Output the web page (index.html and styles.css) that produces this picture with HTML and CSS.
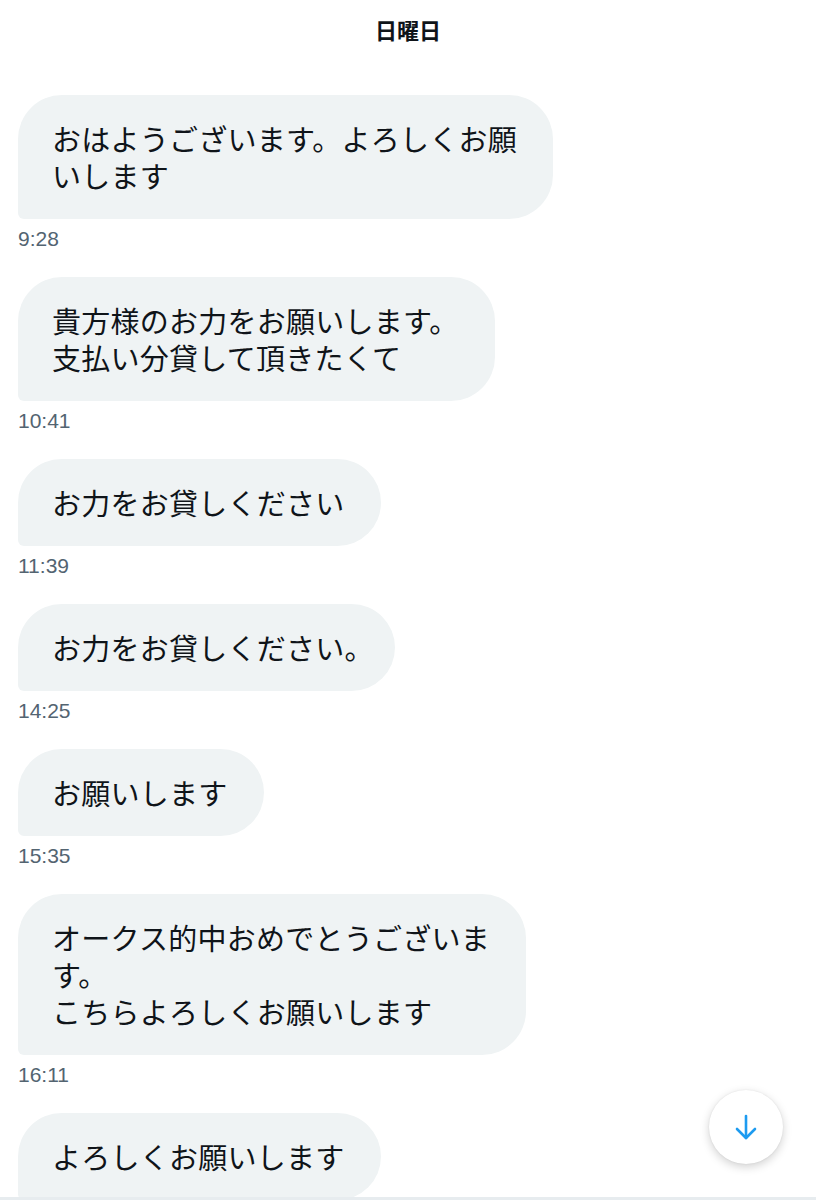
FILE: index.html
```html
<!DOCTYPE html>
<html lang="ja">
<head>
<meta charset="utf-8">
<title>DM</title>
<link rel="stylesheet" href="styles.css">
</head>
<body>
<div class="app">
  <header class="day">日曜日</header>
  <main class="messages">
    <div class="msg">
      <div class="bubble">おはようございます。よろしくお願<br>いします</div>
      <div class="time">9:28</div>
    </div>
    <div class="msg">
      <div class="bubble">貴方様のお力をお願いします。<br>支払い分貸して頂きたくて</div>
      <div class="time">10:41</div>
    </div>
    <div class="msg">
      <div class="bubble">お力をお貸しください</div>
      <div class="time">11:39</div>
    </div>
    <div class="msg">
      <div class="bubble">お力をお貸しください<span class="half">。</span></div>
      <div class="time">14:25</div>
    </div>
    <div class="msg">
      <div class="bubble">お願いします</div>
      <div class="time">15:35</div>
    </div>
    <div class="msg">
      <div class="bubble">オークス的中おめでとうございま<br>す。<br>こちらよろしくお願いします</div>
      <div class="time">16:11</div>
    </div>
    <div class="msg">
      <div class="bubble">よろしくお願いします</div>
    </div>
    <button class="scroll-down" aria-label="下へ">
      <svg width="28" height="28" viewBox="0 0 28 28" fill="none" stroke="#1d9bf0" stroke-width="2.6" stroke-linecap="round" stroke-linejoin="round">
        <path d="M14 3 V25"/>
        <path d="M5 16 L14 25 L23 16"/>
      </svg>
    </button>
  </main>
  <footer class="composer"></footer>
</div>
</body>
</html>
```
FILE: styles.css
```css
html, body {
  margin: 0;
  padding: 0;
  background: #ffffff;
}

body {
  font-family: "Noto Sans CJK JP", "Noto Sans", sans-serif;
  color: #0f1419;
}

.app {
  width: 816px;
  height: 1200px;
  display: flex;
  flex-direction: column;
  overflow: hidden;
}

.day {
  height: 58px;
  flex: none;
  display: flex;
  align-items: center;
  justify-content: center;
  font-size: 22px;
  font-weight: 700;
  color: #0f1419;
}

.messages {
  position: relative;
  flex: 1;
  overflow: hidden;
  padding: 37px 18px 0;
  display: flex;
  flex-direction: column;
  align-items: flex-start;
}

.msg {
  display: flex;
  flex-direction: column;
  align-items: flex-start;
  margin-bottom: 26px;
}

.bubble {
  box-sizing: border-box;
  max-width: 560px;
  padding: 25px 36px 25px 34px;
  background: #eff3f4;
  border-radius: 44px 44px 44px 6px;
  font-size: 29px;
  line-height: 37px;
  letter-spacing: 0.25px;
  color: #0f1419;
  flex: none;
}

.half {
  font-feature-settings: "halt";
}

.time {
  margin-top: 8px;
  font-family: "Liberation Sans", Arial, sans-serif;
  font-size: 21px;
  line-height: 24px;
  color: #536471;
}

.scroll-down {
  position: absolute;
  left: 709px;
  top: 1032px;
  width: 74px;
  height: 74px;
  border: none;
  border-radius: 50%;
  background: #ffffff;
  box-shadow: 0 3px 10px rgba(0, 0, 0, 0.18), 0 0 2px rgba(0, 0, 0, 0.08);
  display: flex;
  align-items: center;
  justify-content: center;
  padding: 0;
}

.composer {
  height: 3px;
  flex: none;
  background: #e7ecef;
}
```
